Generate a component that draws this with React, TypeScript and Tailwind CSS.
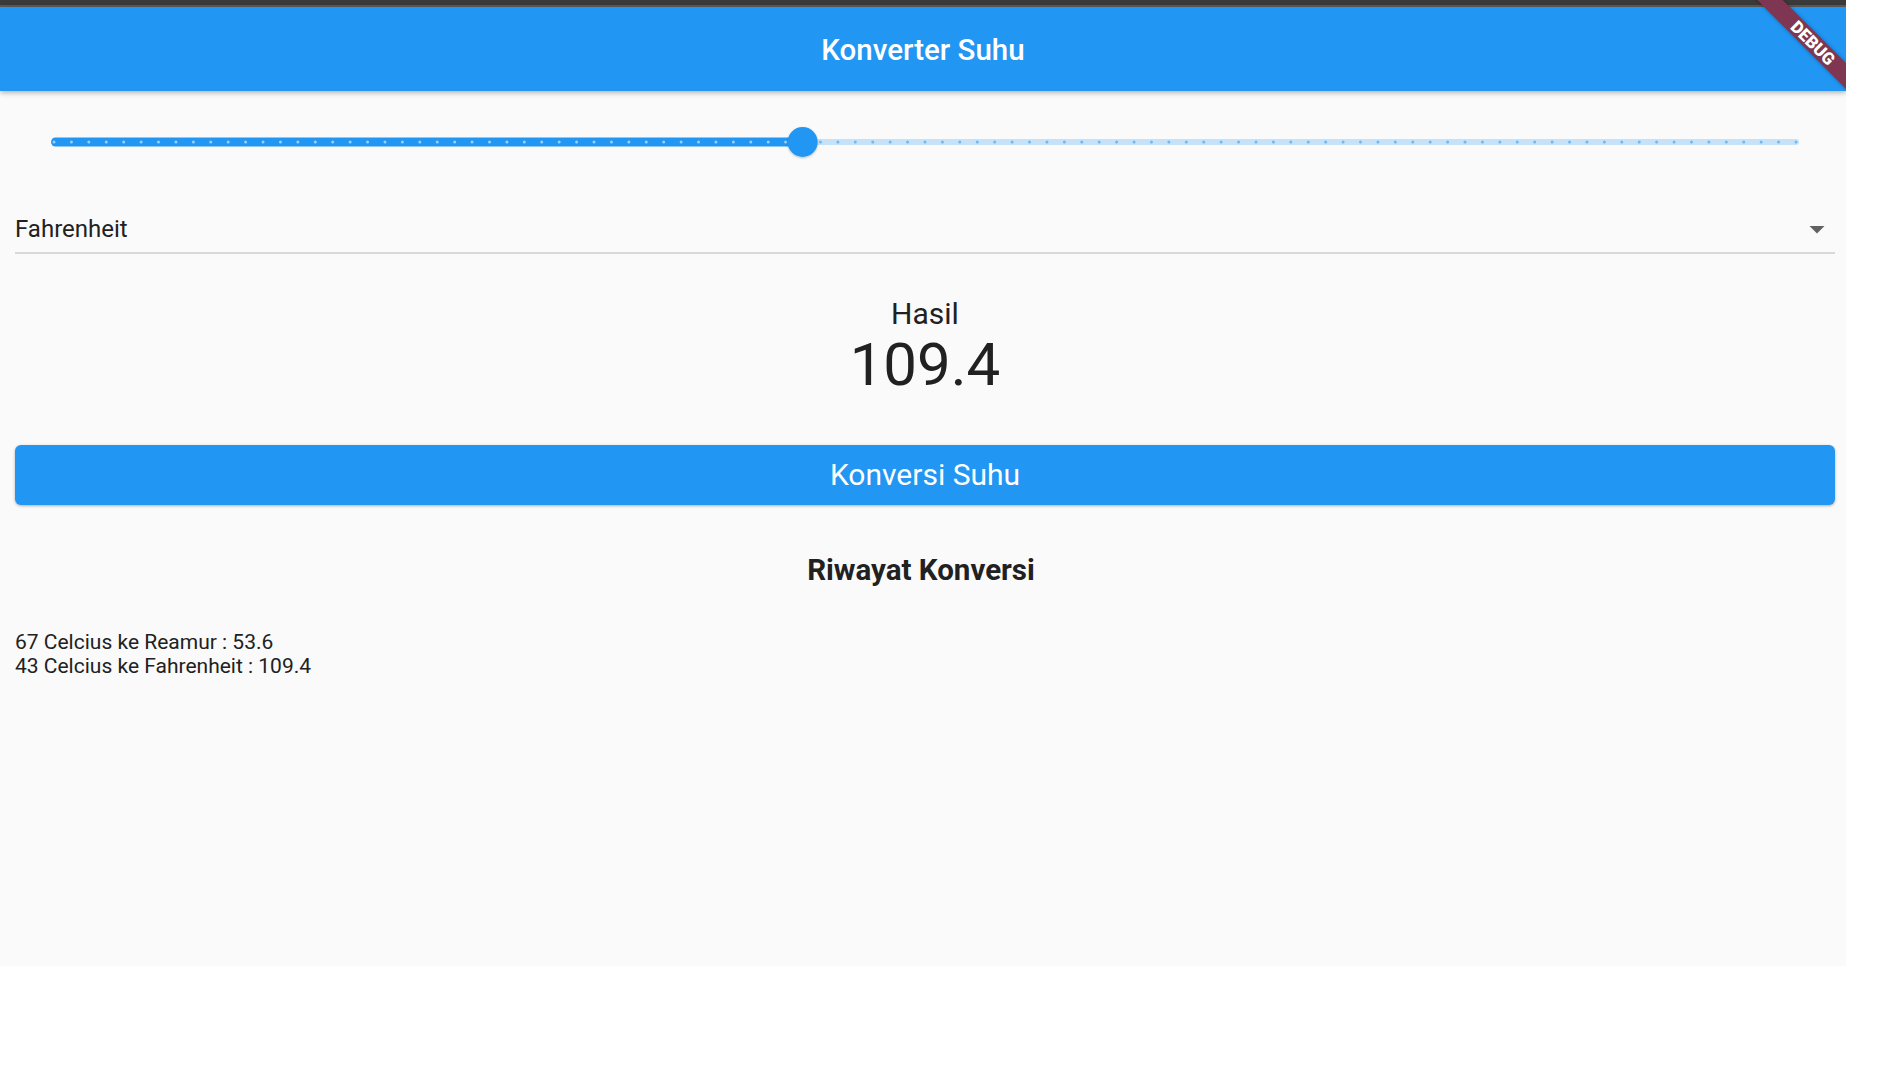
import React from "react";

const TRACK_L = 36; // relative to content box (content starts at x=15)
const TRACK_R = 1784; // content width 1820 - 36
const VALUE = 43;

function Slider() {
  const len = TRACK_R - TRACK_L;
  const thumbX = TRACK_L + (VALUE / 100) * len;
  const cy = 36;
  const ticks: React.ReactNode[] = [];
  for (let i = 0; i <= 100; i++) {
    const x = TRACK_L + 3 + i * ((len - 6) / 100);
    ticks.push(
      <circle
        key={i}
        cx={x}
        cy={cy}
        r={1.5}
        fill={i <= VALUE ? "#99cff9" : "#6db9f5"}
      />
    );
  }
  return (
    <svg width={1820} height={72} viewBox="0 0 1820 72" className="block">
      <defs>
        <filter id="ts" x="-50%" y="-50%" width="200%" height="200%">
          <feDropShadow dx="0" dy="1" stdDeviation="1" floodColor="#000" floodOpacity="0.25" />
        </filter>
      </defs>
      <rect x={thumbX - 4} y={cy - 3} width={TRACK_R - thumbX + 4} height={6} rx={3} fill="#c6e2f8" />
      <rect x={TRACK_L} y={cy - 4.5} width={thumbX - TRACK_L + 4} height={9} rx={4.5} fill="#2196F3" />
      {ticks}
      <circle cx={thumbX} cy={cy} r={15} fill="#2196F3" filter="url(#ts)" />
    </svg>
  );
}

export default function App() {
  return (
    <div
      className="w-[1900px] h-[1080px] bg-white overflow-hidden"
      style={{ fontFamily: "Roboto, 'Noto Sans', sans-serif" }}
    >
      <div className="relative w-[1846px] h-[966px] bg-[#fafafa] overflow-hidden">
        <div className="h-[5px] bg-[#3a3a3a]" />
        <div className="h-[2px] bg-[#5a5a5a]" />
        <div className="relative z-10 h-[84px] bg-[#2196F3] flex items-center justify-center pt-[4px] shadow-[0_2px_5px_rgba(0,0,0,0.28)]">
          <span className="text-white text-[29.5px] font-medium leading-none">
            Konverter Suhu
          </span>
        </div>

        <div className="pl-[15px] pr-[11px] pt-[15px] text-[#212121]">
          <Slider />

          <div className="relative pt-[37px]">
            <div className="text-[24px] leading-[28px]">Fahrenheit</div>
            <div className="h-[9px]" />
            <div className="h-[2px] bg-[#d9d9d9]" />
            <svg
              className="absolute right-0 top-[33px]"
              width={36}
              height={36}
              viewBox="0 0 24 24"
            >
              <path d="M7 10l5 5 5-5z" fill="#616161" />
            </svg>
          </div>

          <div className="mt-[42px] flex flex-col items-center">
            <div className="text-[30px] leading-[34px] pt-[1px]">Hasil</div>
            <div className="text-[60px] leading-[70px] -mt-[1px]">109.4</div>
          </div>

          <button className="mt-[45px] w-full h-[60px] rounded-[6px] bg-[#2196F3] text-white text-[30px] leading-none flex items-center justify-center shadow-[0_1px_3px_rgba(0,0,0,0.3)]">
            Konversi Suhu
          </button>

          <div className="mt-[48px] flex justify-center pr-[8px]">
            <div className="text-[29.5px] leading-[35px] font-bold">Riwayat Konversi</div>
          </div>

          <div className="mt-[42px] text-[21px] leading-[24px]">
            <div>67 Celcius ke Reamur : 53.6</div>
            <div>43 Celcius ke Fahrenheit : 109.4</div>
          </div>
        </div>

        <div className="absolute top-0 right-0 w-[140px] h-[140px] overflow-hidden z-20 pointer-events-none">
          <div
            className="absolute w-[200px] h-[18px] bg-[#7e3652] flex items-center justify-center rotate-45 shadow-[0_0_4px_rgba(0,0,0,0.35)]"
            style={{ left: 7, top: 34 }}
          >
            <span className="text-white text-[17px] font-black leading-none">
              DEBUG
            </span>
          </div>
        </div>
      </div>
    </div>
  );
}
